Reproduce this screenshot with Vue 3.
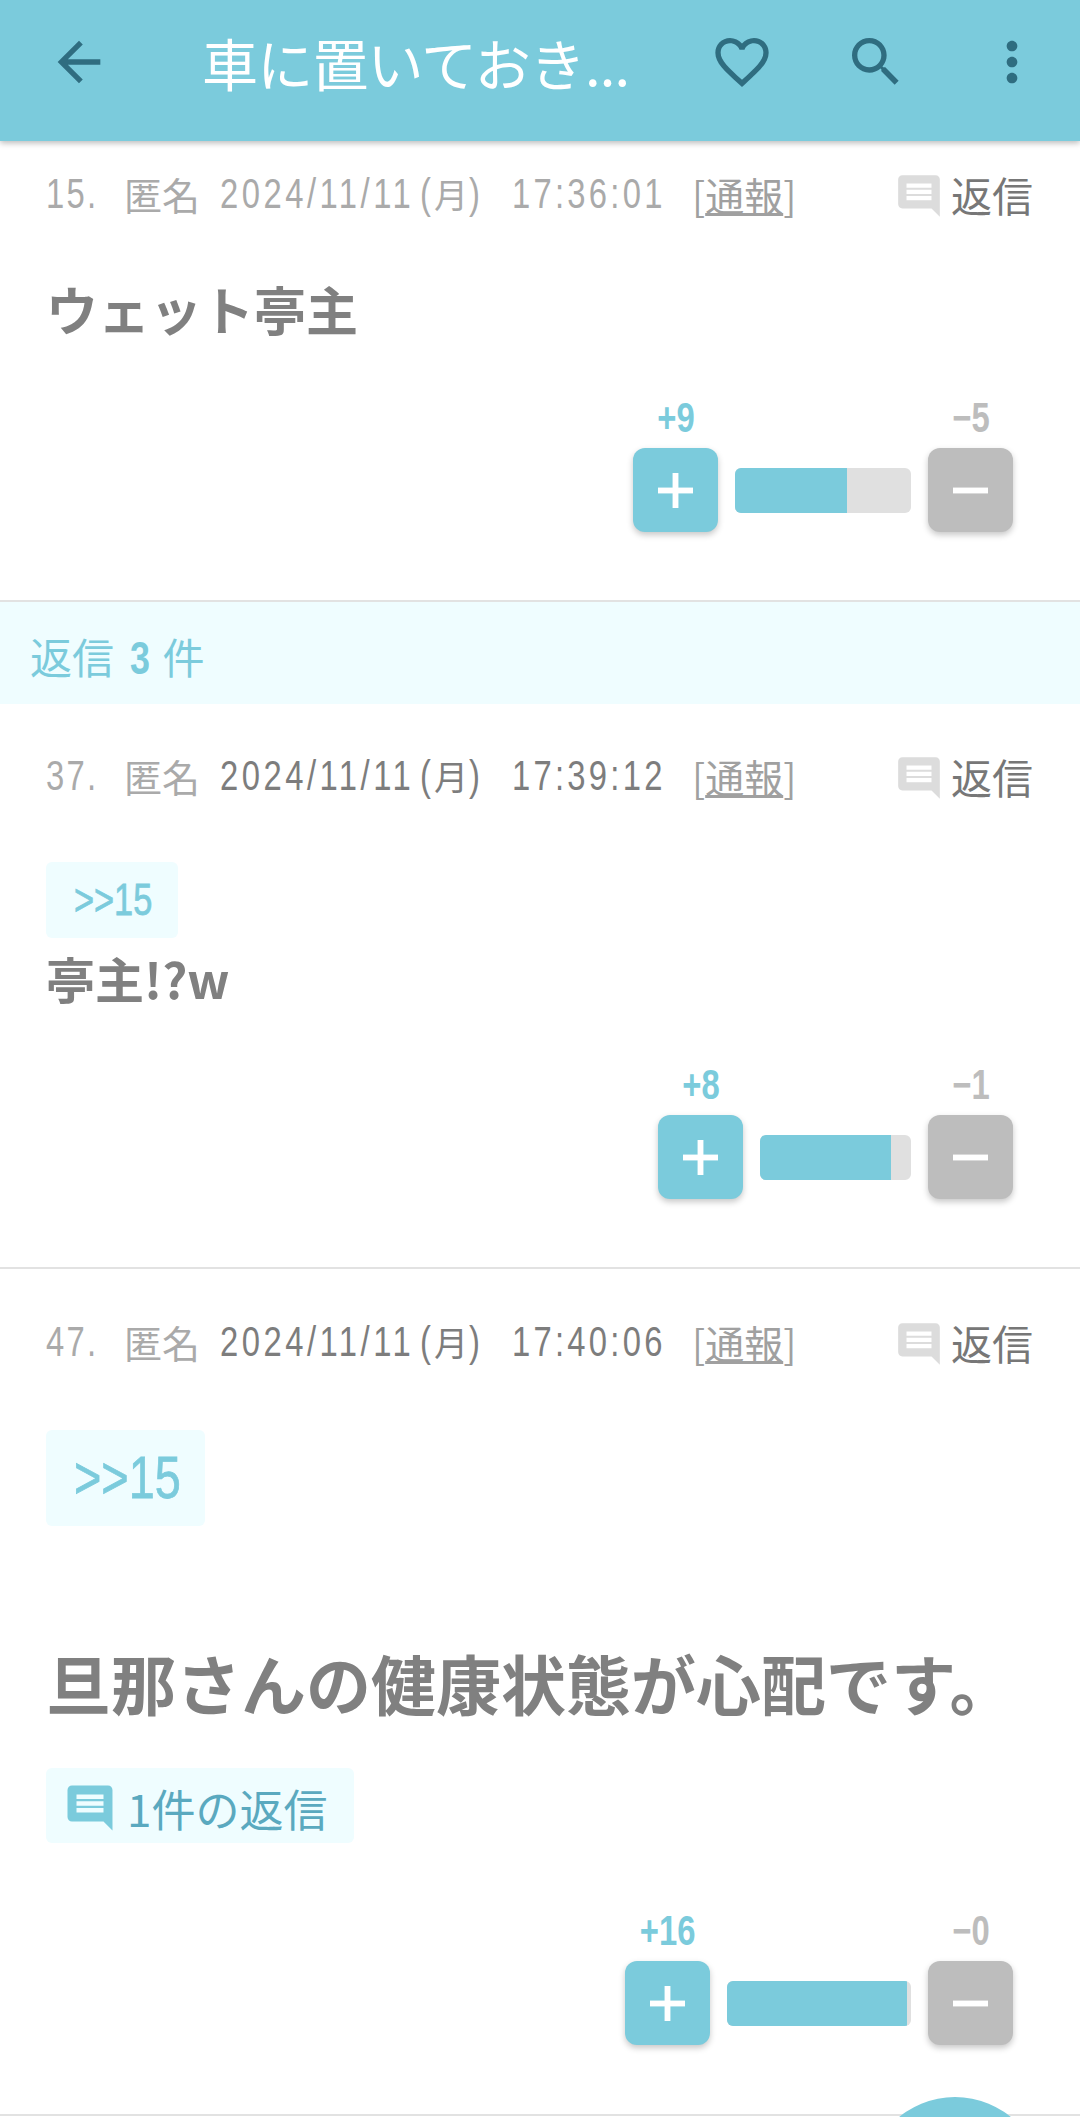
<script setup>
const posts = [
  { id: 15, time: '17:36:01', dim: true, ref: '', body: 'ウェット亭主', bodyClass: 'b1', plus: 9, minus: 5, barW: 176, fill: 63.6 },
  { id: 37, time: '17:39:12', ref: 'small', body: '亭主!?w', bodyClass: 'b2', plus: 8, minus: 1, barW: 151, fill: 86.5 },
  { id: 47, time: '17:40:06', ref: 'big', body: '旦那さんの健康状態が心配です。', bodyClass: 'b3', replies: 1, plus: 16, minus: 0, barW: 184, fill: 98 }
]

const chatPath = 'M21.99 4c0-1.1-.89-2-1.99-2H4c-1.1 0-2 .9-2 2v12c0 1.1.9 2 2 2h14l4 4-.01-18zM18 14H6v-2h12v2zm0-3H6V9h12v2zm0-3H6V6h12v2z'
</script>

<template>
  <div class="page">
    <header class="bar">
      <svg class="ico back" viewBox="0 0 24 24"><path d="M20 11H7.83l5.59-5.59L12 4l-8 8 8 8 1.41-1.41L7.83 13H20v-2z" /></svg>
      <div class="title">車に置いておき...</div>
      <svg class="ico heart" viewBox="0 0 24 24"><path d="M16.5 3c-1.74 0-3.41.81-4.5 2.09C10.91 3.81 9.24 3 7.5 3 4.42 3 2 5.42 2 8.5c0 3.78 3.4 6.86 8.55 11.54L12 21.35l1.45-1.32C18.6 15.36 22 12.28 22 8.5 22 5.42 19.58 3 16.5 3zm-4.4 15.55l-.1.1-.1-.1C7.14 14.24 4 11.39 4 8.5 4 6.5 5.5 5 7.5 5c1.54 0 3.04.99 3.57 2.36h1.87C13.46 5.99 14.96 5 16.5 5c2 0 3.5 1.5 3.5 3.5 0 2.89-3.14 5.74-7.9 10.05z" /></svg>
      <svg class="ico search" viewBox="0 0 24 24"><path d="M15.5 14h-.79l-.28-.27C15.41 12.59 16 11.11 16 9.5 16 5.91 13.09 3 9.5 3S3 5.91 3 9.5 5.91 16 9.5 16c1.61 0 3.09-.59 4.23-1.57l.27.28v.79l5 4.99L20.49 19l-4.99-5zm-6 0C7.01 14 5 11.99 5 9.5S7.01 5 9.5 5 14 7.01 14 9.5 11.99 14 9.5 14z" /></svg>
      <svg class="ico more" viewBox="0 0 24 24"><path d="M12 8c1.1 0 2-.9 2-2s-.9-2-2-2-2 .9-2 2 .9 2 2 2zm0 2c-1.1 0-2 .9-2 2s.9 2 2 2 2-.9 2-2-.9-2-2-2zm0 6c-1.1 0-2 .9-2 2s.9 2 2 2 2-.9 2-2-.9-2-2-2z" /></svg>
    </header>

    <template v-for="(p, i) in posts" :key="p.id">
      <article class="post" :class="'post' + i">
        <div class="meta" :class="{ dim: p.dim }">
          <span class="num"><span class="nar">{{ p.id }}.</span></span>
          <span class="name">匿名</span>
          <span class="date">
            <span class="nar days">2024/11/11</span><span class="nar paren">(</span><span class="moon">月</span><span class="nar paren">)</span>
          </span>
          <span class="time"><span class="nar">{{ p.time }}</span></span>
          <span class="report">[<u>通報</u>]</span>
          <span class="reply">
            <svg class="reply-ico" viewBox="0 0 24 24"><path :d="chatPath" /></svg>
            返信
          </span>
        </div>

        <div v-if="p.ref" class="ref" :class="p.ref"><span class="nar">&gt;&gt;15</span></div>
        <div class="body" :class="p.bodyClass">{{ p.body }}</div>

        <div v-if="p.replies" class="replies">
          <svg class="replies-ico" viewBox="0 0 24 24"><path :d="chatPath" /></svg>
          {{ p.replies }}件の返信
        </div>

        <div class="votes">
          <div class="vote">
            <div class="score plus"><span class="nar">+{{ p.plus }}</span></div>
            <div class="btn btn-plus">
              <svg width="35" height="35" viewBox="0 0 36 36"><rect x="15" width="6" height="36" /><rect y="15" width="36" height="6" /></svg>
            </div>
          </div>
          <div class="meter" :style="{ width: p.barW + 'px' }">
            <div class="fill" :style="{ width: p.fill + '%' }"></div>
          </div>
          <div class="vote">
            <div class="score minus"><span class="nar">−{{ p.minus }}</span></div>
            <div class="btn btn-minus">
              <svg width="35" height="35" viewBox="0 0 36 36"><rect y="15" width="36" height="6" /></svg>
            </div>
          </div>
        </div>
      </article>
      <div v-if="i === 0" class="band"><span>返信</span><b class="nar">3</b><span>件</span></div>
    </template>

    <div class="fab"></div>
  </div>
</template>

<style>
html, body { margin: 0; background: #fff; }
</style>

<style scoped>
.page {
  position: relative;
  width: 1080px;
  height: 2117px;
  overflow: hidden;
  background: #fff;
  font-family: "Liberation Sans", "Noto Sans CJK JP", sans-serif;
}

/* the app's latin face is condensed, none installed so squeeze it */
.nar { display: inline-block; transform: scaleX(0.78); transform-origin: left center; }

.bar {
  position: relative;
  z-index: 2;
  display: flex;
  align-items: center;
  height: 141px;
  padding-bottom: 18px;
  box-sizing: border-box;
  background: #7bcbdc;
  box-shadow: 0 2px 6px rgba(0, 0, 0, 0.28);
}
.ico { width: 64px; height: 64px; flex: none; fill: #2f6d80; }
.back { margin-left: 47px; }
.title {
  width: 506px;
  margin-left: 91px;
  font-family: "Noto Sans CJK JP", sans-serif;
  font-size: 56px;
  line-height: 64px;
  letter-spacing: -0.8px;
  color: #fff;
  white-space: nowrap;
}
.heart { margin-left: 2px; }
.search { margin-left: 70px; }
.more { margin-left: 72px; }

.post { border-bottom: 2px solid #e2e2e2; box-sizing: border-box; }
.post0 { height: 461px; padding-top: 28px; }
.post1 { height: 565px; padding-top: 47px; }
.post2 { height: 847px; padding-top: 48px; }

.meta {
  display: flex;
  align-items: center;
  height: 50px;
  padding: 0 47px 0 46px;
  font-size: 42px;
  line-height: 50px;
  color: #7d7d7d;
  white-space: nowrap;
}
.num { width: 78px; color: #aaa; letter-spacing: 3px; }
.name { width: 96px; color: #aaa; font-family: "Noto Sans CJK JP", sans-serif; font-size: 38px; }
.date { display: flex; align-items: center; width: 292px; }
.days { width: 200px; letter-spacing: 4.5px; }
.paren { width: 14px; }
.moon { width: 35px; font-family: "Noto Sans CJK JP", sans-serif; font-size: 34px; }
.time { width: 180px; letter-spacing: 4.2px; }
.report { color: #a0a0a0; font-family: "Noto Sans CJK JP", sans-serif; font-size: 39px; }
.dim .date, .dim .time { color: #aaa; }
.reply {
  display: flex;
  align-items: center;
  margin-left: auto;
  color: #777;
  font-family: "Noto Sans CJK JP", sans-serif;
  font-size: 41px;
}
.reply-ico { width: 50px; height: 50px; margin: 3px 7px 0 0; fill: #dcdcdc; }

.ref {
  box-sizing: border-box;
  margin-left: 46px;
  background: #effdff;
  border-radius: 6px;
  color: #7bcbdc;
  -webkit-text-stroke: 0.8px #7bcbdc;
}
.ref.small { width: 132px; height: 76px; margin-top: 61px; padding-left: 28px; font-size: 44px; line-height: 76px; }
.ref.big { width: 159px; height: 96px; margin-top: 63px; padding-left: 28px; font-size: 60px; line-height: 96px; }

.body {
  margin-left: 46px;
  font-family: "Noto Sans CJK JP", sans-serif;
  font-weight: 700;
  color: #808080;
  white-space: nowrap;
}
.b1 { margin-top: 60px; font-size: 52px; line-height: 60px; }
.b2 { margin-top: 5px; font-size: 49px; line-height: 70px; }
.b3 { margin-top: 120px; font-size: 65px; line-height: 72px; }

.replies {
  display: flex;
  align-items: center;
  box-sizing: border-box;
  width: 308px;
  height: 75px;
  margin: 50px 0 0 46px;
  padding-top: 4px;
  background: #effdff;
  border-radius: 6px;
  color: #5aa9bf;
  font-family: "Noto Sans CJK JP", sans-serif;
  font-size: 44px;
}
.replies-ico { width: 54px; height: 54px; margin: 0 10px 0 17px; fill: #7bcbdc; }

.votes { display: flex; justify-content: flex-end; align-items: flex-end; gap: 17px; padding-right: 67px; }
.post0 .votes { margin-top: 54px; }
.post1 .votes { margin-top: 47px; }
.post2 .votes { margin-top: 63px; }
.vote { width: 85px; }
.score { height: 50px; margin-bottom: 5px; font-size: 42px; font-weight: 700; line-height: 50px; text-align: center; }
.score .nar { transform-origin: center; }
.score.plus { color: #7bcbdc; }
.score.minus { color: #bdbdbd; }
.btn {
  display: flex;
  align-items: center;
  justify-content: center;
  height: 84px;
  border-radius: 12px;
  box-shadow: 0 3px 6px rgba(0, 0, 0, 0.22);
}
.btn svg { fill: #fff; }
.btn-plus { background: #7bcbdc; }
.btn-minus { background: #bdbdbd; }
.meter { height: 45px; margin-bottom: 19px; overflow: hidden; background: #e0e0e0; border-radius: 6px; }
.fill { height: 100%; background: #7bcbdc; }

.band {
  height: 102px;
  box-sizing: border-box;
  padding-left: 30px;
  background: #effdff;
  color: #7bcbdc;
  font-size: 42px;
  line-height: 112px;
}
.band b { margin: 0 7px 0 16px; font-size: 46px; }

.fab {
  position: absolute;
  left: 867px;
  top: 2097px;
  width: 176px;
  height: 176px;
  border-radius: 50%;
  background: #7bcbdc;
}
</style>
